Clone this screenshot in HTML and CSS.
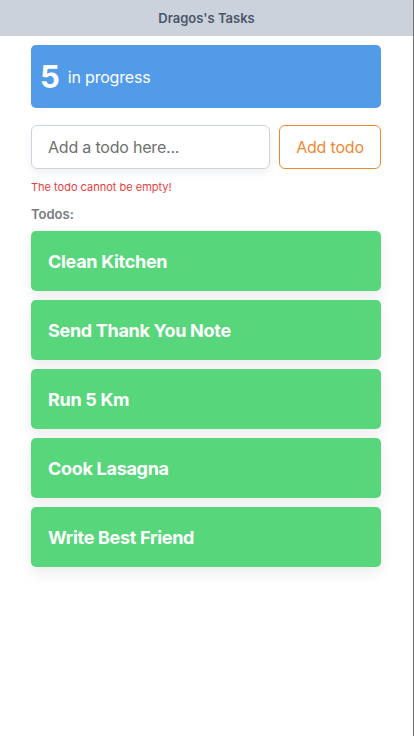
FILE: index.html
```html
<!DOCTYPE html>
<html>
<head>
<meta charset="utf-8">
<link rel="stylesheet" href="styles.css">
</head>
<body>
<div class="app">
  <header class="header">Dragos's Tasks</header>
  <main class="main">
    <div class="progress"><span class="count">5</span><span class="label">in progress</span></div>
    <div class="form">
      <input class="input" type="text" placeholder="Add a todo here...">
      <button class="btn">Add todo</button>
    </div>
    <p class="error">The todo cannot be empty!</p>
    <h2 class="title">Todos:</h2>
    <ul class="list">
      <li class="todo">Clean Kitchen</li>
      <li class="todo">Send Thank You Note</li>
      <li class="todo">Run 5 Km</li>
      <li class="todo">Cook Lasagna</li>
      <li class="todo">Write Best Friend</li>
    </ul>
  </main>
</div>
</body>
</html>
```
FILE: styles.css
```css
* { box-sizing: border-box; }
html, body { margin: 0; padding: 0; }
body { font-family: Inter, "Noto Sans", sans-serif; background: #fff; }
.app {
  width: 414px;
  min-height: 736px;
  border-right: 1px solid #6e6e6e;
}
.header {
  height: 36px;
  background: #cbd2dc;
  color: #4a5568;
  font-size: 13px;
  font-weight: 600;
  display: flex;
  align-items: center;
  justify-content: center;
}
.main {
  padding: 9px 32px 0 31px;
}
.progress {
  height: 63px;
  background: #529be9;
  border-radius: 5px;
  color: #fff;
  display: flex;
  align-items: center;
  padding-left: 9px;
}
.count { font-size: 31px; font-weight: 700; margin-right: 8px; }
.label { font-size: 16px; margin-top: 1px; letter-spacing: -0.2px; }
.form {
  display: flex;
  gap: 9px;
  margin-top: 17px;
}
.input {
  width: 239px;
  min-width: 0;
  flex: none;
  height: 44px;
  border: 1px solid #cbd5e0;
  border-radius: 6px;
  padding: 0 16px;
  font-family: inherit;
  font-size: 16px;
  color: #333;
  box-shadow: 0 4px 10px rgba(0,0,0,0.06);
  outline: none;
}
.input::placeholder { color: #707070; letter-spacing: -0.2px; }
.btn {
  width: 102px;
  flex: none;
  height: 44px;
  border: 1px solid #ed8936;
  border-radius: 6px;
  background: #fff;
  color: #ed8936;
  font-family: inherit;
  font-size: 16px;
  white-space: nowrap;
  padding: 0;
  letter-spacing: -0.2px;
}
.error {
  margin: 11px 0 0;
  color: #e53e3e;
  font-size: 11px;
}
.title {
  margin: 12px 0 0;
  font-size: 13px;
  font-weight: 600;
  color: #777b80;
}
.list {
  list-style: none;
  margin: 9px 0 0;
  padding: 0;
  display: flex;
  flex-direction: column;
  gap: 9px;
}
.todo {
  height: 60px;
  background: #58d67c;
  border-radius: 5px;
  color: #fff;
  font-size: 18px;
  font-weight: 700;
  letter-spacing: -0.3px;
  display: flex;
  align-items: center;
  padding-left: 17px;
  box-shadow: 0 6px 14px rgba(0,0,0,0.08);
}
```
